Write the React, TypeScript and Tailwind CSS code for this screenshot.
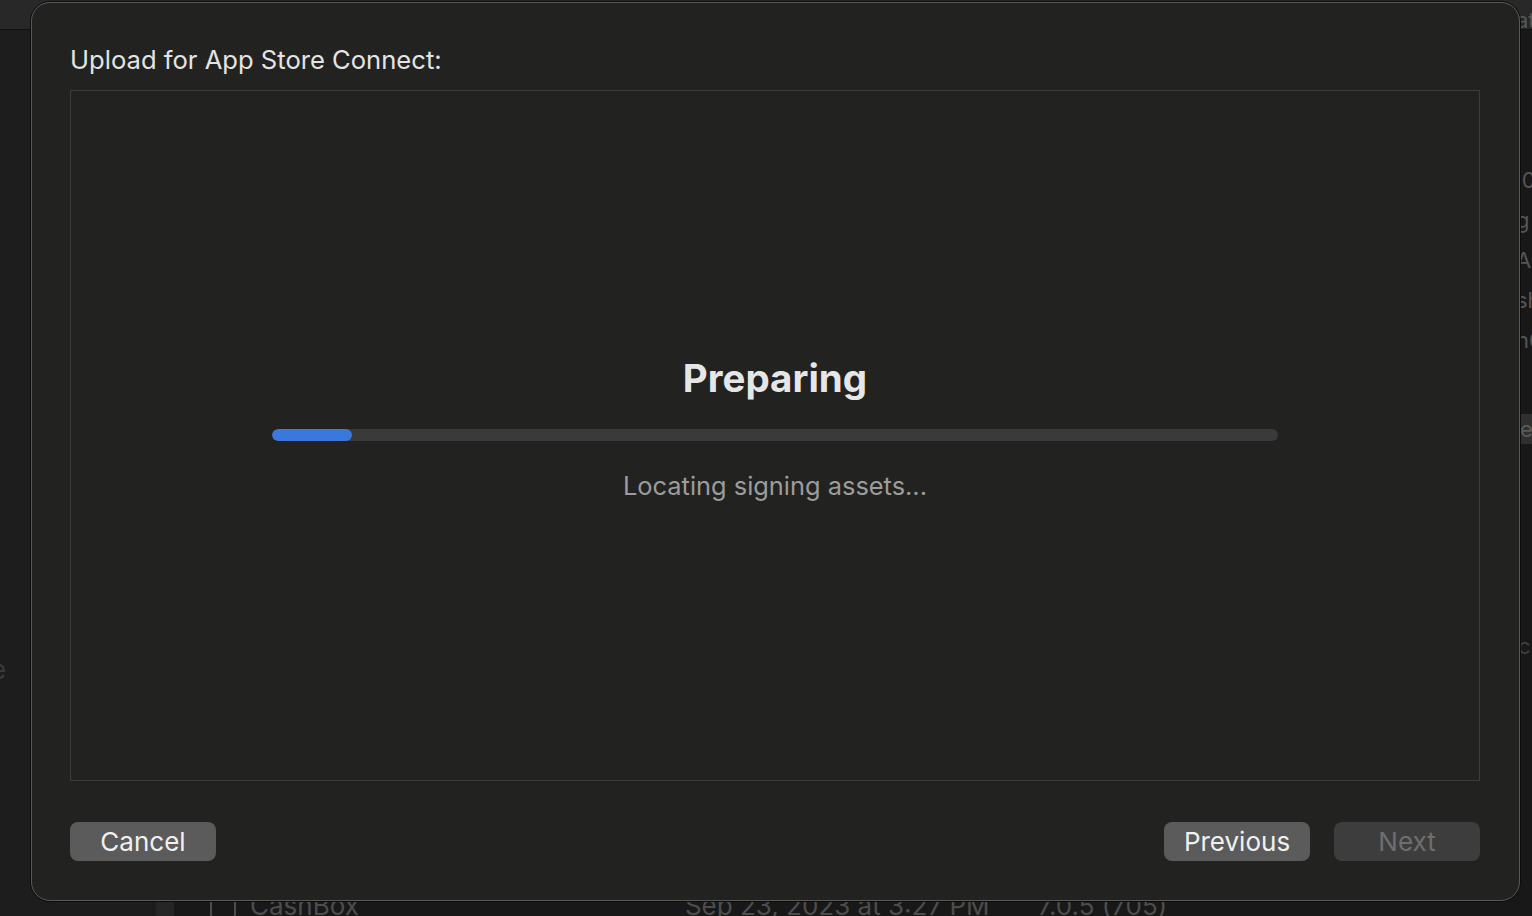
import { useState } from 'react';

const font = { fontFamily: 'Inter, "Noto Sans", sans-serif' };

// ends of archive rows peeking out behind the sheet on the right
const sideRows = ['.0', 'g', 'A', 'sh', 'n6'];

export default function App() {
  const [progress] = useState(8);

  return (
    <div
      className="relative w-[1532px] h-[916px] overflow-hidden bg-[#1c1c1c] text-[#e6e6e6]"
      style={font}
    >
      {/* window behind the sheet */}
      <div className="flex flex-col h-full">
        <div className="h-[30px] bg-[#282828] border-b border-[#111] relative">
          <span className="absolute left-[1516px] top-[4px] text-[22px] text-[#555]">at</span>
        </div>
        <div className="flex flex-1">
          <div className="w-[156px] bg-[#1d1d1d] relative">
            <span className="absolute left-[-9px] top-[620px] text-[26px] text-[#3a3a3a]">e</span>
          </div>
          <div className="w-[18px] bg-[#262626]" />
          <div className="flex-1 bg-[#181818] relative">
            <div className="absolute left-[36px] top-[856px] flex items-center gap-[14px] text-[26px] text-[#4d4d4d]">
              <div className="w-[26px] h-[26px] border-2 border-[#4d4d4d] rounded-[5px]" />
              <span>CashBox</span>
              <span className="ml-[312px]">Sep 23, 2023 at 3:27 PM</span>
              <span className="ml-[34px]">7.0.5 (705)</span>
            </div>
            <div className="absolute left-[1342px] top-[130px] flex flex-col text-[22px] text-[#555] leading-[40px]">
              {sideRows.map((r) => (
                <span key={r}>{r}</span>
              ))}
            </div>
            <div className="absolute right-0 top-[384px] w-[14px] h-[30px] bg-[#2f2f2f] text-[22px] text-[#5a5a5a] leading-[30px] pl-[2px]">
              e
            </div>
            <span className="absolute left-[1344px] top-[600px] text-[22px] text-[#3f3f3f]">c</span>
          </div>
        </div>
      </div>

      {/* sheet */}
      <div className="absolute left-[30px] top-[1px] w-[1491px] h-[901px] rounded-[20px] border border-[#0c0c0c]">
        <div className="flex flex-col h-full rounded-[19px] border border-[#595959] bg-[#222221] pl-[38px] pr-[39px] pt-[41px] pb-[39px]">
          <h1 className="text-[25.6px] leading-[32px] text-[#e4e4e4] mb-[14px]">
            Upload for App Store Connect:
          </h1>

          <div className="flex-1 border border-[#3d3d3d] flex flex-col items-center justify-center pb-[16px]">
            <div className="text-[38.5px] leading-[48px] font-bold text-[#e6e6e6]">Preparing</div>
            <div className="mt-[27px] w-[1006px] h-[12px] rounded-full bg-[#3a3a3a] overflow-hidden">
              <div
                className="h-full rounded-full bg-[#3a78dc]"
                style={{ width: `${progress}%` }}
              />
            </div>
            <div className="mt-[29px] text-[25.4px] leading-[32px] text-[#9c9c9c]">
              Locating signing assets...
            </div>
          </div>

          <div className="flex items-center mt-[41px]">
            <button className="w-[146px] h-[39px] rounded-[8px] bg-[#5b5b5b] text-[26px] text-[#f0f0f0]">
              Cancel
            </button>
            <div className="flex-1" />
            <button className="w-[146px] h-[39px] rounded-[8px] bg-[#5b5b5b] text-[26px] text-[#f0f0f0]">
              Previous
            </button>
            <button className="ml-[24px] w-[146px] h-[39px] rounded-[8px] bg-[#3d3d3d] text-[26px] text-[#6e6e6e]">
              Next
            </button>
          </div>
        </div>
      </div>
    </div>
  );
}
